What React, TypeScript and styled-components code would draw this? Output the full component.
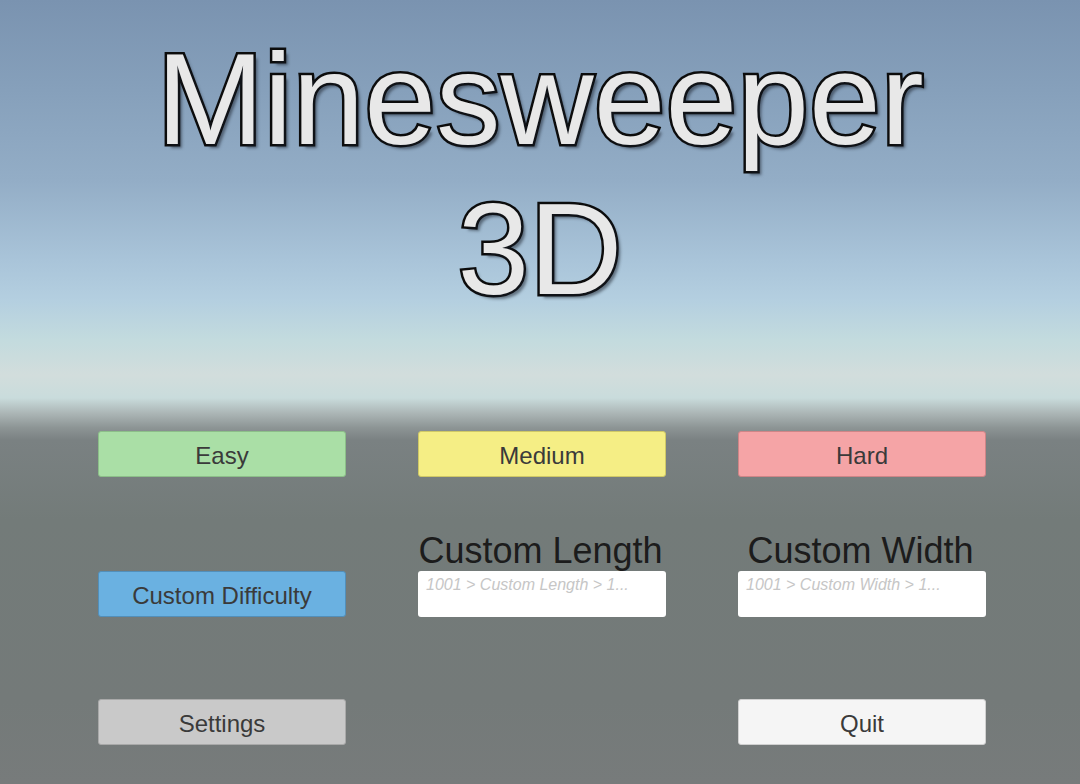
import React from "react";
import styled, { createGlobalStyle } from "styled-components";

const GlobalStyle = createGlobalStyle`
  html, body { margin: 0; padding: 0; }
  body {
    font-family: "Liberation Sans", Arial, sans-serif;
    overflow: hidden;
  }
`;

const Screen = styled.div`
  width: 1080px;
  height: 784px;
  display: flex;
  flex-direction: column;
  background: linear-gradient(
    to bottom,
    #7a93b0 0px,
    #86a0bb 90px,
    #93adc6 180px,
    #a9c4d9 260px,
    #b4cfe0 300px,
    #c3dbde 340px,
    #d2dddc 375px,
    #c9dcdc 398px,
    #aab4b4 414px,
    #8c9494 428px,
    #7a8182 440px,
    #737b79 520px,
    #747a79 700px,
    #777b7b 784px
  );
`;

const Title = styled.h1`
  margin: 24px 0 0;
  font-family: "Liberation Sans", Arial, sans-serif;
  font-weight: 400;
  font-size: 129px;
  line-height: 150px;
  text-align: center;
  color: #e8e8e8;
  -webkit-text-stroke: 5px #0c0c0c;
  paint-order: stroke fill;
  text-shadow: 4px 4px 3px rgba(20, 25, 35, 0.5);
`;

const Grid = styled.div`
  margin-top: 107px;
  padding-left: 98px;
  display: grid;
  grid-template-columns: repeat(3, 248px);
  grid-template-rows: 46px 140px 128px;
  column-gap: 72px;
  align-items: end;
`;

const Cell = styled.div<{ $col: number; $row: number }>`
  grid-column: ${(p) => p.$col};
  grid-row: ${(p) => p.$row};
  display: flex;
  flex-direction: column;
  align-items: stretch;
`;

const Button = styled.button<{ $bg: string; $edge: string }>`
  height: 46px;
  width: 248px;
  box-sizing: border-box;
  border: 1px solid ${(p) => p.$edge};
  border-radius: 3px;
  background: ${(p) => p.$bg};
  color: #3a3a3a;
  font-family: "Liberation Sans", Arial, sans-serif;
  font-size: 24px;
  padding: 3px 0 0;
  cursor: pointer;
  display: flex;
  align-items: center;
  justify-content: center;
`;

const FieldLabel = styled.div`
  font-family: "Liberation Sans", Arial, sans-serif;
  font-size: 36px;
  line-height: 40px;
  color: #1c1c1c;
  text-align: center;
  white-space: nowrap;
  margin-left: -3px;
`;

const Field = styled.div`
  height: 46px;
  box-sizing: border-box;
  background: #ffffff;
  border-radius: 3px;
  padding: 4px 8px 0;
  font-family: "Liberation Sans", Arial, sans-serif;
  font-style: italic;
  font-size: 16px;
  line-height: 20px;
  color: #c6c6c6;
  white-space: nowrap;
  overflow: hidden;
`;

export default function App() {
  return (
    <Screen>
      <GlobalStyle />
      <Title>
        Minesweeper
        <br />
        3D
      </Title>
      <Grid>
        <Cell $col={1} $row={1}>
          <Button $bg="#aadfa6" $edge="#8cbf89">Easy</Button>
        </Cell>
        <Cell $col={2} $row={1}>
          <Button $bg="#f5ee85" $edge="#cfc866">Medium</Button>
        </Cell>
        <Cell $col={3} $row={1}>
          <Button $bg="#f5a4a6" $edge="#cf8587">Hard</Button>
        </Cell>
        <Cell $col={1} $row={2}>
          <Button $bg="#6ab1e1" $edge="#528fba">Custom Difficulty</Button>
        </Cell>
        <Cell $col={2} $row={2}>
          <FieldLabel>Custom Length</FieldLabel>
          <Field>1001 &gt; Custom Length &gt; 1...</Field>
        </Cell>
        <Cell $col={3} $row={2}>
          <FieldLabel>Custom Width</FieldLabel>
          <Field>1001 &gt; Custom Width &gt; 1...</Field>
        </Cell>
        <Cell $col={1} $row={3}>
          <Button $bg="#c9c9c9" $edge="#a9a9a9">Settings</Button>
        </Cell>
        <Cell $col={3} $row={3}>
          <Button $bg="#f5f5f5" $edge="#d0d0d0">Quit</Button>
        </Cell>
      </Grid>
    </Screen>
  );
}
